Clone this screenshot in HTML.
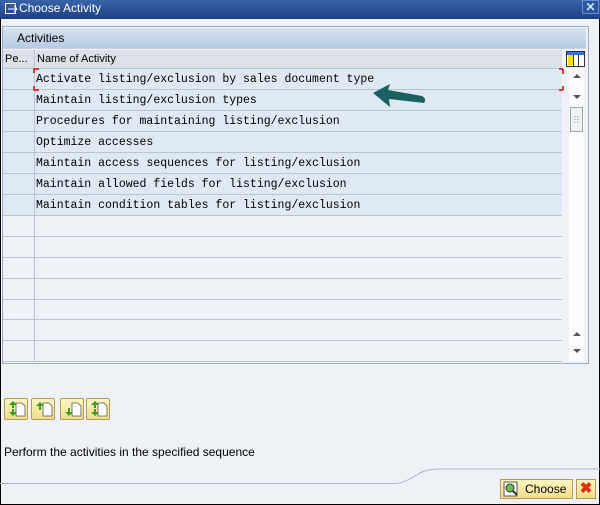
<!DOCTYPE html>
<html><head><style>
*{margin:0;padding:0;box-sizing:border-box}
body{width:600px;height:505px;overflow:hidden;background:#eef1f6;font-family:"Liberation Sans",sans-serif;position:relative}
.title{position:absolute;left:0;top:0;width:600px;height:19px;background:linear-gradient(#3a63a8,#1c3f86);color:#fff;font-size:12px;line-height:16px;padding-left:19px}
.frame{position:absolute;left:0;top:19px;width:600px;height:486px;border-left:1px solid #000;border-right:1px solid #000;border-bottom:1px solid #000}
.panel{position:absolute;left:2px;top:26px;width:587px;height:338px;border:1px solid #9aaccc;background:#eef1f6}
.hdr{position:absolute;left:3px;top:28px;width:583px;height:21px;background:linear-gradient(#d6e2ef,#b5cbe0);font-size:12px;line-height:20px;padding-left:14px;color:#000;border-bottom:1px solid #c9d3df}
.colh{position:absolute;top:50px;height:19px;background:#dde1e7;font-size:11px;line-height:19px;border-bottom:1px solid #b8c4d2;color:#000}
.row{position:absolute;left:3px;width:559px;height:21px;border-bottom:1px solid #b8c4d2}
.row .c1{position:absolute;left:0;top:0;width:32px;height:20px;border-right:1px solid #b8c4d2}
.row span{position:absolute;left:33px;top:4px;font-family:"Liberation Mono",monospace;font-size:11.5px;color:#000;white-space:nowrap}
.f{background:#dee9f4}.e{background:#eef1f6}
.sb{position:absolute;left:569px;top:69px;width:15px;height:292px;background:#fdfbff}
.btn{position:absolute;top:398px;width:24px;height:22px;background:linear-gradient(#fff5c0,#f2dd8a);border:1px solid #b39a55;border-radius:2px}
</style></head><body>
<div class="title">Choose Activity</div>
<svg style="position:absolute;left:5px;top:3px" width="13" height="12"><rect x="0.5" y="0.5" width="10" height="10" fill="none" stroke="#fff"/><path d="M3 6h9M9 3l3 3-3 3" stroke="#fff" fill="none"/></svg>
<div style="position:absolute;left:582px;top:0;width:17px;height:14px;background:#2c55a0;border:1px solid #6f8fc8;color:#cfe0ff;font-size:12px;line-height:12px;text-align:center;font-weight:bold">✕</div>
<div class="frame"></div>
<div class="panel"></div>
<div class="hdr">Activities</div>
<div class="colh" style="left:3px;width:32px;padding-left:2px;border-right:1px solid #b8c4d2">Pe...</div>
<div class="colh" style="left:35px;width:527px;padding-left:2px">Name of Activity</div>
<div style="position:absolute;left:566px;top:51px;width:19px;height:16px;background:#fff;border:1px solid #333"><div style="position:absolute;left:1px;top:1px;width:5px;height:12px;background:#f5e000"></div><div style="position:absolute;left:0;top:0;width:17px;height:3px;background:#2a78d0"></div><div style="position:absolute;left:6px;top:3px;width:1px;height:11px;background:#333"></div><div style="position:absolute;left:11px;top:3px;width:1px;height:11px;background:#333"></div></div>
<div class="row f" style="top:69px"><div class="c1"></div><span>Activate listing/exclusion by sales document type</span></div>
<div class="row f" style="top:90px"><div class="c1"></div><span>Maintain listing/exclusion types</span></div>
<div class="row f" style="top:111px"><div class="c1"></div><span>Procedures for maintaining listing/exclusion</span></div>
<div class="row f" style="top:132px"><div class="c1"></div><span>Optimize accesses</span></div>
<div class="row f" style="top:153px"><div class="c1"></div><span>Maintain access sequences for listing/exclusion</span></div>
<div class="row f" style="top:174px"><div class="c1"></div><span>Maintain allowed fields for listing/exclusion</span></div>
<div class="row f" style="top:195px"><div class="c1"></div><span>Maintain condition tables for listing/exclusion</span></div>
<div class="row e" style="top:216px"><div class="c1"></div></div>
<div class="row e" style="top:237px"><div class="c1"></div></div>
<div class="row e" style="top:258px"><div class="c1"></div></div>
<div class="row e" style="top:279px"><div class="c1"></div></div>
<div class="row e" style="top:300px;height:20px"><div class="c1"></div></div>
<div class="row e" style="top:320px"><div class="c1"></div></div>
<div class="row e" style="top:341px;height:21px"><div class="c1"></div></div>
<svg style="position:absolute;left:33px;top:68px" width="532" height="24"><path d="M1 5V1h5M1 18v4h5M530 1h-4M530 1v5M530 22h-4M530 22v-4" stroke="#e00" stroke-width="1.5" fill="none"/></svg>
<div class="sb"></div>
<svg style="position:absolute;left:569px;top:69px" width="16" height="292"><path d="M4 9h8l-4-4z" fill="#4b5866"/><path d="M4 26h8l-4 4z" fill="#4b5866"/><rect x="1.5" y="38.5" width="12" height="24" fill="#eef1f6" stroke="#9aa4b0"/><path d="M6 47v1M9 47v1M6 50v1M9 50v1M6 53v1M9 53v1" stroke="#888"/><path d="M4 267h8l-4-4z" fill="#4b5866"/><path d="M4 280h8l-4 4z" fill="#4b5866"/></svg>
<svg style="position:absolute;left:370px;top:83px" width="58" height="30"><path d="M3 10L20 1L18 7L52 13Q57 16 54 20L19 16L20 24Z" fill="#1a6060"/></svg>
<div class="btn" style="left:4px"></div><div class="btn" style="left:31px"></div><div class="btn" style="left:60px"></div><div class="btn" style="left:86px"></div>
<svg style="position:absolute;left:4px;top:398px" width="110" height="22"><g fill="#fff" stroke="#555" stroke-width="0.8"><path d="M12 5h6l3 3v10h-9z"/><path d="M39 5h6l3 3v10h-9z"/><path d="M68 5h6l3 3v10h-9z"/><path d="M94 5h6l3 3v10h-9z"/></g><g fill="#3a9a2a"><path d="M5 7l4-4 4 4h-3v3h-2v-3z"/><path d="M5 14l4 4 4-4h-3v-3h-2v3z"/><path d="M32 8l4-4 4 4h-3v4h-2v-4z"/><path d="M61 14l4 4 4-4h-3v-4h-2v4z"/><path d="M87 7l4-4 4 4h-3v3h-2v-3z"/><path d="M87 14l4 4 4-4h-3v-3h-2v3z"/></g></svg>
<div style="position:absolute;left:4px;top:445px;font-size:12px;color:#000">Perform the activities in the specified sequence</div>
<svg style="position:absolute;left:0;top:465px" width="600" height="20"><path d="M0 18.5H395Q405 18 420 8Q428 4 440 4H600" stroke="#a9b6c8" fill="none"/></svg>
<div style="position:absolute;left:500px;top:479px;width:73px;height:20px;background:linear-gradient(#fff5c0,#f2dd8a);border:1px solid #b39a55;font-size:12px;line-height:18px;padding-left:24px">Choose</div>
<svg style="position:absolute;left:503px;top:481px" width="16" height="16"><rect x="1" y="1" width="13" height="14" fill="#fff" stroke="#555"/><circle cx="7" cy="7" r="4" fill="#6bbf4a" stroke="#333"/><path d="M10 10l4 4" stroke="#333" stroke-width="2"/></svg>
<div style="position:absolute;left:576px;top:479px;width:20px;height:20px;background:linear-gradient(#fff5c0,#f2dd8a);border:1px solid #b39a55;color:#e03010;font-weight:bold;font-size:15px;line-height:18px;text-align:center">✖</div>
</body></html>
